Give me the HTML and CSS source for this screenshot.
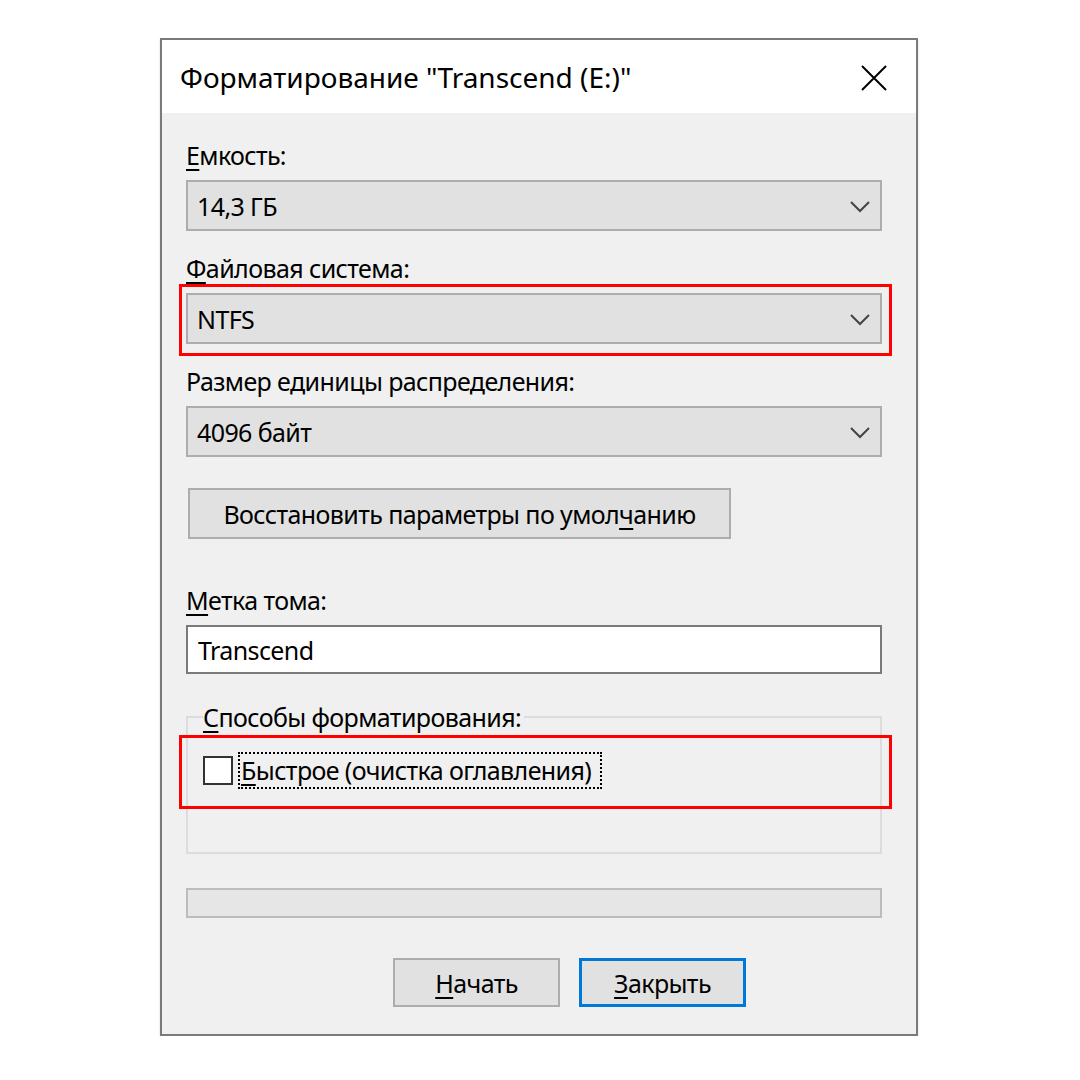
FILE: index.html
```html
<!DOCTYPE html>
<html lang="ru">
<head>
<meta charset="utf-8">
<link rel="stylesheet" href="styles.css">
</head>
<body>
<div class="window">
  <div class="titlebar">
    <span class="title">Форматирование "Transcend (E:)"</span>
    <svg class="close" width="28" height="28" viewBox="0 0 28 28"><path d="M2 2 L26 26 M26 2 L2 26" stroke="#000" stroke-width="2" fill="none"/></svg>
  </div>
  <div class="content">
    <div class="label"><u>Е</u>мкость:</div>
    <div class="combo"><span>14,3 ГБ</span><svg class="chev" width="20" height="12" viewBox="0 0 20 12"><path d="M1 1 L10 10 L19 1" stroke="#444" stroke-width="2" fill="none"/></svg></div>

    <div class="label gap"><u>Ф</u>айловая система:</div>
    <div class="combo"><span>NTFS</span><svg class="chev" width="20" height="12" viewBox="0 0 20 12"><path d="M1 1 L10 10 L19 1" stroke="#444" stroke-width="2" fill="none"/></svg></div>

    <div class="label gap">Размер единицы распределения:</div>
    <div class="combo"><span>4096 байт</span><svg class="chev" width="20" height="12" viewBox="0 0 20 12"><path d="M1 1 L10 10 L19 1" stroke="#444" stroke-width="2" fill="none"/></svg></div>

    <div class="btn restore">Восстановить параметры по умол<u>ч</u>анию</div>

    <div class="label gap-vol"><u>М</u>етка тома:</div>
    <div class="textbox">Transcend</div>

    <fieldset class="group">
      <legend><u>С</u>пособы форматирования:</legend>
      <div class="check-row">
        <span class="checkbox"></span>
        <span class="check-label"><u>Б</u>ыстрое (очистка оглавления)</span>
      </div>
    </fieldset>

    <div class="progress"></div>

    <div class="actions">
      <div class="btn action"><u>Н</u>ачать</div>
      <div class="btn action default"><u>З</u>акрыть</div>
    </div>
  </div>
  <div class="highlight h1"></div>
  <div class="highlight h2"></div>
</div>
</body>
</html>
```

FILE: styles.css
```css
html, body {
  margin: 0;
  padding: 0;
  background: #ffffff;
}
body {
  font-family: "Noto Sans", "Open Sans", sans-serif;
  font-size: 25px;
  letter-spacing: -0.6px;
  color: #000;
}
u {
  text-decoration-thickness: 2px;
  text-underline-offset: 4px;
}
.window {
  position: relative;
  box-sizing: border-box;
  width: 758px;
  height: 998px;
  margin: 38px 0 0 160px;
  border: 2px solid #7a7a7a;
  background: #f0f0f0;
  box-shadow: 0 1px 2px rgba(0,0,0,0.15);
}
.titlebar {
  height: 73px;
  background: #ffffff;
  display: flex;
  align-items: center;
  justify-content: space-between;
  padding: 0 28px 0 18px;
}
.title {
  font-size: 28px;
  letter-spacing: 0;
}
.close {
  margin-top: 2px;
}
.content {
  padding: 24px 34px 0 24px;
}
.label {
  height: 36px;
  line-height: 36px;
  margin-bottom: 7px;
}
.label.gap { margin-top: 19px; }
.label.gap-vol { margin-top: 43px; margin-bottom: 7px; }
.combo {
  box-sizing: border-box;
  height: 51px;
  border: 2px solid #adadad;
  background: #e1e1e1;
  display: flex;
  align-items: center;
  justify-content: space-between;
  padding: 0 10px 0 9px;
}
.chev { margin-top: 2px; }
.btn {
  box-sizing: border-box;
  border: 2px solid #adadad;
  background: #e1e1e1;
  display: flex;
  align-items: center;
  justify-content: center;
}
.restore {
  width: 543px;
  height: 51px;
  margin: 31px 0 0 2px;
}
.textbox {
  box-sizing: border-box;
  height: 49px;
  border: 2px solid #7a7a7a;
  background: #ffffff;
  display: flex;
  align-items: center;
  padding-left: 10px;
}
.group {
  margin: 25px 0 0 0;
  border: 2px solid #dcdcdc;
  padding: 17px 15px 63px 15px;
  min-width: 0;
}
.group legend {
  height: 36px;
  line-height: 36px;
  padding: 0 3px 0 0;
  margin-left: 0;
}
.check-row {
  display: flex;
  align-items: center;
  height: 37px;
}
.checkbox {
  box-sizing: border-box;
  width: 30px;
  height: 29px;
  border: 2px solid #333333;
  background: #ffffff;
  margin-right: 5px;
}
.check-label {
  box-sizing: border-box;
  height: 37px;
  line-height: 33px;
  border: 2px dotted #000;
  padding: 0 9px 0 1px;
}
.progress {
  box-sizing: border-box;
  height: 30px;
  margin-top: 34px;
  border: 2px solid #bcbcbc;
  background: #e6e6e6;
}
.actions {
  display: flex;
  justify-content: flex-end;
  gap: 19px;
  margin-top: 40px;
  padding-right: 136px;
}
.action {
  width: 167px;
  height: 49px;
}
.action.default {
  border: 3px solid #0078d7;
}
.highlight {
  position: absolute;
  box-sizing: border-box;
  border: 3px solid #ff0000;
  left: 17px;
  width: 713px;
}
.h1 { top: 244px; height: 72px; }
.h2 { top: 695px; height: 74px; }
```
